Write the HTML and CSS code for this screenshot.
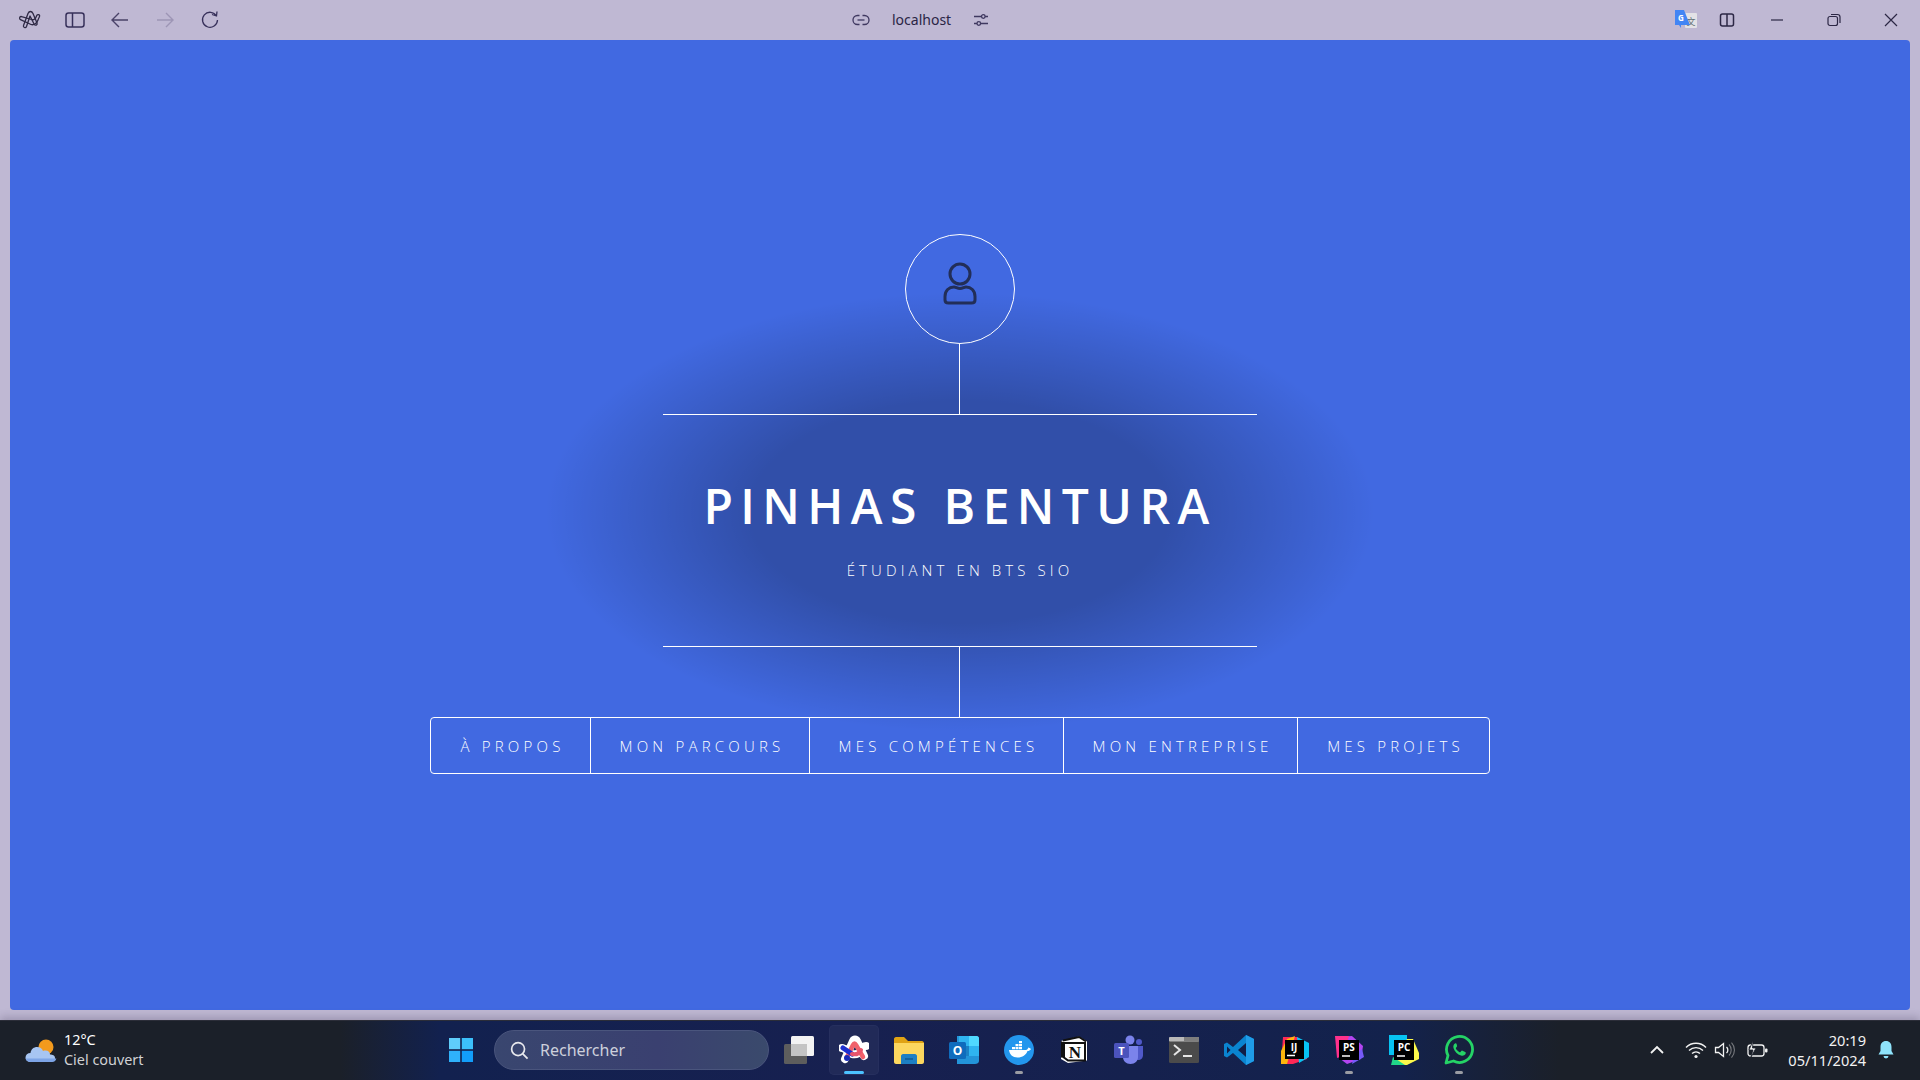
FILE: index.html
```html
<!DOCTYPE html>
<html lang="fr">
<head>
<meta charset="utf-8">
<title>Pinhas Bentura</title>
<link rel="stylesheet" href="styles.css">
</head>
<body>
<header class="topbar">
  <div class="tb-left">
    <svg class="tb-ico" viewBox="0 0 24 24"><g fill="none" stroke="#2f2a45" stroke-width="1.3" stroke-linejoin="round"><path d="M12.5 3.500c1.500 0 2 1 2.500 2l4 9.500c.8 2-1.800 3-2.800 1.200L12 8 8.500 18.500c-.8 2-3.600 1-3-1l4.500-12c.5-1.200 1.300-2 2.500-2z"/><path d="M3 8.500c-1.500 0-2 2.500-.5 3.200L13 16.500c3 1 6-1.500 7-4.500 .8-2.500 2-3.500 1.600-4.500-.6-1.500-2.600-1-3.100.5-.8 2.400-2.300 4.500-5 3.500L4.500 8.800C4 8.600 3.500 8.500 3 8.500z"/></g></svg>
    <svg class="tb-ico" viewBox="0 0 24 24"><g fill="none" stroke="#37305a" stroke-width="1.500"><rect x="3" y="5" width="18" height="14" rx="2.500"/><path d="M9.500 5v14"/></g></svg>
    <svg class="tb-ico" viewBox="0 0 24 24"><path d="M20 12H5M11 5l-7 7 7 7" fill="none" stroke="#4a4268" stroke-width="1.400"/></svg>
    <svg class="tb-ico" viewBox="0 0 24 24"><path d="M4 12h15M13 5l7 7-7 7" fill="none" stroke="#9d95b5" stroke-width="1.400"/></svg>
    <svg class="tb-ico" viewBox="0 0 24 24"><path d="M18.500 8A7.500 7.500 0 1 0 19.500 12M14 6.500l4.500 1.500.5-4.500" fill="none" stroke="#37305a" stroke-width="1.300"/></svg>
  </div>
  <div class="tb-center">
    <svg class="tb-small" viewBox="0 0 18 18"><g fill="none" stroke="#3f3860" stroke-width="1.300"><path d="M7.500 4.500H5.500a4.500 4.500 0 0 0 0 9h2M10.500 4.500h2a4.500 4.500 0 0 1 0 9h-2"/><path d="M5.500 9h7"/></g></svg>
    <span class="url">localhost</span>
    <svg class="tb-small" viewBox="0 0 18 18"><g fill="none" stroke="#3f3860" stroke-width="1.300"><path d="M2 5.500h7.500M13 5.500h3M2 12.500h3M8.500 12.500h7.500"/><circle cx="11.300" cy="5.500" r="1.800"/><circle cx="6.800" cy="12.500" r="1.800"/></g></svg>
  </div>
  <div class="tb-right">
    <svg class="tr-translate" viewBox="0 0 22 22"><rect x="10" y="4" width="12" height="15" rx="1" fill="#e3e2e6"/><text x="16" y="16" class="tr-x">文</text><path d="M0 1h9l6 15H6v3l-2-3H0z" fill="#4285f4"/><text x="6" y="11.500" class="tr-g">G</text></svg>
    <svg class="tr-ico tr-split" viewBox="0 0 18 18"><g fill="none" stroke="#2c2745" stroke-width="1.500"><rect x="2.500" y="3" width="13" height="12" rx="2"/><path d="M9 3v12"/></g></svg>
    <svg class="tr-ico" viewBox="0 0 18 18"><path d="M3 9h12" stroke="#2c2745" stroke-width="1.200" fill="none"/></svg>
    <svg class="tr-ico" viewBox="0 0 18 18"><g fill="none" stroke="#2c2745" stroke-width="1.200"><rect x="3" y="5.500" width="9.500" height="9" rx="2"/><path d="M6 3.500h6.500a2.500 2.500 0 0 1 2.500 2.500v6"/></g></svg>
    <svg class="tr-ico" viewBox="0 0 18 18"><path d="M3 3l12 12M15 3L3 15" stroke="#2c2745" stroke-width="1.200" fill="none"/></svg>
  </div>
</header>

<main class="window">
  <section class="hero">
    <div class="logo">
      <svg class="logo-ico" viewBox="0 0 40 44"><g fill="none" stroke="#222e58" stroke-width="3"><circle cx="20" cy="12" r="10"/><path d="M8.500 41h23c2.500 0 3.500-1 3.500-3v-3.500c0-6-4-9.500-9-9.500-2 0-3.200 1.500-6 1.500s-4-1.500-6-1.500c-5 0-9 3.500-9 9.500V38c0 2 1 3 3.500 3z"/></g></svg>
    </div>
    <div class="vline"></div>
    <div class="content">
      <h1>PINHAS BENTURA</h1>
      <p>ÉTUDIANT EN BTS SIO</p>
    </div>
    <div class="vline"></div>
    <nav class="menu">
      <a>À PROPOS</a>
      <a>MON PARCOURS</a>
      <a>MES COMPÉTENCES</a>
      <a>MON ENTREPRISE</a>
      <a>MES PROJETS</a>
    </nav>
  </section>
</main>

<footer class="taskbar">
  <div class="weather">
    <svg class="weather-ico" viewBox="0 0 32 28"><circle cx="21" cy="10" r="7.500" fill="#f39a1d"/><path d="M6 25c-3.500 0-5.500-2-5.500-4.500S2.500 16 5.500 16c.5-4 3.500-6 6.500-6 3 0 5 1.500 6 4 .8-.4 1.500-.5 2.500-.5 3 0 4.500 2 4.500 4 2.500 0 5 .8 5 3.500 0 3-2 4-4.500 4z" fill="#a7c5f2"/><path d="M6 25c-3 0-5-1.500-5.400-3.500h30.800c-.4 2.500-2.400 3.500-4.900 3.500z" fill="#7da4e6"/></svg>
    <div class="weather-text"><span class="temp">12°C</span><span class="cond">Ciel couvert</span></div>
  </div>
  <div class="tasks">
    <div class="task">
      <svg class="app" viewBox="0 0 30 30"><path d="M3 3h11.200v11.200H3z" fill="#5fcdfb"/><path d="M15.800 3H27v11.200H15.800z" fill="#3cc0fb"/><path d="M3 15.800h11.200V27H3z" fill="#2fb1fb"/><path d="M15.800 15.800H27V27H15.800z" fill="#129dfa"/></svg>
    </div>
    <div class="search">
      <svg class="search-ico" viewBox="0 0 20 20"><g fill="none" stroke="#e8e9ee" stroke-width="1.800"><circle cx="8.500" cy="8.500" r="6.800"/><path d="M13.500 13.500l5 5"/></g></svg>
      <span>Rechercher</span>
    </div>
    <div class="task">
      <svg class="app" viewBox="0 0 30 30"><rect x="0" y="9" width="23" height="20" rx="1.500" fill="#5d5d5d"/><rect x="7" y="1" width="23" height="20" rx="1.500" fill="#f3f3f3"/><rect x="7" y="9" width="16" height="12" fill="#c4c4c4"/></svg>
    </div>
    <div class="task active">
      <svg class="app" viewBox="0 0 30 30"><path d="M6 24L14 6c1-2 3-2 4 0l7 15M3 13c3 0 7 5 10 6 5 1 8-1 9-4 1-2 3-4 5-4" fill="none" stroke="#fff" stroke-width="8" stroke-linecap="round" stroke-linejoin="round"/><path d="M14 10c1-2 2-2 3 0l7 12M8 22l6-12" fill="none" stroke="#f0616b" stroke-width="4.500" stroke-linecap="round"/><path d="M4 13l9 6" fill="none" stroke="#1d2fd0" stroke-width="5" stroke-linecap="round"/><path d="M13 19c4 1 7 0 9-4" fill="none" stroke="#e8546b" stroke-width="4" stroke-linecap="round"/><circle cx="8" cy="23" r="3" fill="#1a2bb8"/></svg>
    </div>
    <div class="task">
      <svg class="app" viewBox="0 0 30 30"><path d="M0 4c0-1 .8-2 2-2h8l4 4h14c1 0 2 1 2 2v4H0z" fill="#e0a314"/><path d="M0 8h30v19c0 1-1 2-2 2H2c-1 0-2-1-2-2z" fill="#fcd75f"/><path d="M7 21c0-1 1-2 2-2h12c1 0 2 1 2 2v8H7z" fill="#1d7fc4"/><path d="M11 24h8" stroke="#0b4f86" stroke-width="1.200"/></svg>
    </div>
    <div class="task">
      <svg class="app" viewBox="0 0 30 30"><path d="M8 1h18c2 0 4 1 4 3v22c0 2-2 3-4 3H8z" fill="#2394d9"/><path d="M10 1h10v10H10z" fill="#2fb4f0"/><path d="M20 1h8c1 0 2 1 2 2v8H20z" fill="#50d9ff"/><path d="M10 11h10v10H10z" fill="#1b80c4"/><path d="M20 11h10v10H20z" fill="#2fb4f0"/><rect x="0" y="7" width="17" height="17" rx="1.500" fill="#0f6cbd"/><text x="8.500" y="20" class="ol-o">O</text></svg>
    </div>
    <div class="task dot">
      <svg class="app" viewBox="0 0 30 30"><circle cx="15" cy="15" r="15" fill="#2396ed"/><path d="M5 15h17c1 0 2-1 2.200-2.500 1 .2 2 .6 2.800 1.500-1 1.500-2 2-3.500 2-1.500 4-5 6.500-10 6.500-5 0-8-3-8.500-7.500z" fill="#fff"/><path d="M8 12h3v2.300H8zM11.500 12h3v2.300h-3zM15 12h3v2.300h-3zM11.500 9h3v2.300h-3zM15 9h3v2.300h-3zM15 6h3v2.300h-3z" fill="#fff"/></svg>
    </div>
    <div class="task">
      <svg class="app" viewBox="0 0 30 30"><path d="M2 6l18-4.500 8 5v19L9 28l-7-4z" fill="#fff"/><path d="M5 8h21v17.500H9l-4-3z" fill="#fff" stroke="#111" stroke-width="2"/><path d="M2 6l3.500 2v15L2 22.500z" fill="#111"/><path d="M4 5.500L20 2l7 4.500" fill="none" stroke="#111" stroke-width="1.800"/><text x="16" y="23" class="no-n">N</text></svg>
    </div>
    <div class="task">
      <svg class="app" viewBox="0 0 30 30"><circle cx="16" cy="5" r="4.500" fill="#7b83eb"/><circle cx="25" cy="7" r="3" fill="#5059c9"/><path d="M21 11h8v9c0 3-2 5-5 5s-3-1-3-3z" fill="#5059c9"/><path d="M9 11h15v11c0 4-3 7-7.500 7S9 26 9 22z" fill="#7b83eb"/><rect x="0" y="8" width="15" height="15" rx="1.500" fill="#4b53bc"/><text x="7.500" y="20" class="te-t">T</text></svg>
    </div>
    <div class="task">
      <svg class="app" viewBox="0 0 30 30"><rect x="0" y="2" width="30" height="26" rx="1.500" fill="#4b4b4b"/><rect x="0" y="2" width="30" height="4.500" rx="1" fill="#b9b9b9"/><rect x="15" y="2" width="15" height="4.500" fill="#7e7e7e"/><path d="M5 10l6 5-6 5" fill="none" stroke="#e6e6e6" stroke-width="2"/><path d="M14 21h9" stroke="#e6e6e6" stroke-width="2"/></svg>
    </div>
    <div class="task">
      <svg class="app" viewBox="0 0 30 30"><path d="M22 0l8 4v22l-8 4-13-12-6 4.500-3-1.500V9l3-1.500L9 12z" fill="#0a84d0"/><path d="M22 0l8 4v22l-8 4z" fill="#1f9ce8"/><path d="M22 8l-8 7 8 7z" fill="#111d45"/><path d="M3 11.500L6.500 15 3 18.500z" fill="#111d45"/></svg>
    </div>
    <div class="task">
      <svg class="app" viewBox="0 0 30 30"><path d="M4 2h14l12 8-2 14-14 5H2z" fill="#fe2857"/><path d="M18 2l12 6v14l-10 6z" fill="#07c3f2"/><path d="M2 16l6-12 8-3-8 28H2z" fill="#fdb60d"/><rect x="6" y="5" width="19" height="19" fill="#000"/><text x="15" y="15.500" class="jb-t">IJ</text><path d="M8 20.500h8" stroke="#fff" stroke-width="1.500"/></svg>
    </div>
    <div class="task dot">
      <svg class="app" viewBox="0 0 30 30"><path d="M2 2l16-1 11 10-2 13-14 5-8-6z" fill="#b345f1"/><path d="M1 1h14l-6 20-6 2z" fill="#ff318c"/><path d="M20 20l8-6 2 8-12 7z" fill="#765af8"/><rect x="5" y="5" width="20" height="20" fill="#000"/><text x="15" y="16" class="jb-t">PS</text><path d="M8 21h8" stroke="#fff" stroke-width="1.500"/></svg>
    </div>
    <div class="task">
      <svg class="app" viewBox="0 0 30 30"><path d="M0 0h18v10H6v8H0z" fill="#21d789"/><path d="M0 0h18v8H8v12H0z" fill="#07c3f2"/><path d="M18 4h6l6 14v6l-12 6-14 0 0-6z" fill="#fcf84a"/><path d="M4 22l12 8h-14z" fill="#21d789"/><rect x="5" y="5" width="20" height="20" fill="#000"/><text x="15" y="16" class="jb-t">PC</text><path d="M8 21h8" stroke="#fff" stroke-width="1.500"/></svg>
    </div>
    <div class="task dot">
      <svg class="app" viewBox="0 0 30 30"><path d="M2 28l2-7.500A13 13 0 1 1 9.500 26z" fill="none" stroke="#25d366" stroke-width="2.800" stroke-linejoin="round"/><path d="M11 8.500c-1.500 1-2 2.500-1.500 4.500 1 3.500 4 6.500 7.500 7.500 2 .5 3.500 0 4.500-1.500.5-1 .3-1.700-.3-2l-2.700-1.300c-.6-.3-1 0-1.300.4l-.7.8c-.4.4-.8.400-1.300.1-1.300-.7-2.500-1.900-3.200-3.200-.3-.5-.2-.9.200-1.300l.6-.7c.3-.4.400-.8.200-1.300L12.500 8.700c-.3-.6-.9-.7-1.500-.2z" fill="#25d366"/></svg>
    </div>
  </div>
  <div class="tray">
    <svg class="chev" viewBox="0 0 16 16"><path d="M2 11l6-6 6 6" fill="none" stroke="#f2f2f2" stroke-width="1.800"/></svg>
    <svg class="wifi" viewBox="0 0 22 18"><g fill="none" stroke="#f2f2f2" stroke-width="1.400"><path d="M1 6.500a14 14 0 0 1 20 0"/><path d="M4 9.500a10 10 0 0 1 14 0"/><path d="M7 12.500a6 6 0 0 1 8 0"/></g><circle cx="11" cy="15.500" r="1.600" fill="#f2f2f2"/></svg>
    <svg class="vol" viewBox="0 0 22 18"><path d="M1.500 6.500h3l5-4v13l-5-4h-3z" fill="none" stroke="#f2f2f2" stroke-width="1.300"/><path d="M12.500 6a4 4 0 0 1 0 6" fill="none" stroke="#f2f2f2" stroke-width="1.300"/><path d="M15 3.500a8 8 0 0 1 0 11M17.500 1.500a11 11 0 0 1 0 15" fill="none" stroke="#77797e" stroke-width="1.100"/></svg>
    <svg class="batt" viewBox="0 0 22 18"><rect x="1" y="4" width="16" height="11" rx="2.500" fill="none" stroke="#f2f2f2" stroke-width="1.300"/><rect x="18" y="7.500" width="2.500" height="4" rx="1" fill="#f2f2f2"/><path d="M6 0L2 9h4l-2 7 5-9H5.500z" fill="#f2f2f2" stroke="#1b2029" stroke-width=".8"/></svg>
    <div class="clock"><span>20:19</span><span>05/11/2024</span></div>
    <svg class="bell" viewBox="0 0 18 20"><path d="M9 1c-3.500 0-5.500 2.500-5.500 6v4L1.500 14.500h15L14.500 11V7C14.500 3.500 12.500 1 9 1z" fill="#8fe3fb"/><path d="M6.500 16a2.500 2.500 0 0 0 5 0z" fill="#8fe3fb"/></svg>
  </div>
</footer>
</body>
</html>
```
FILE: styles.css
```css
* { box-sizing: border-box; }
html, body { margin: 0; height: 100%; }
body {
  width: 1920px;
  height: 1080px;
  overflow: hidden;
  display: flex;
  flex-direction: column;
  background: #bfb8d3;
  font-family: "Open Sans", "Noto Sans", sans-serif;
}

/* browser chrome */
.topbar {
  height: 40px;
  flex: none;
  display: flex;
  align-items: center;
}
.tb-left {
  width: 852px;
  padding-left: 18px;
  display: flex;
  align-items: center;
  gap: 21px;
}
.tb-ico { width: 24px; height: 24px; display: block; flex: none; }
.tb-center {
  display: flex;
  align-items: center;
  color: #2a2545;
  font-size: 14px;
}
.tb-small { width: 18px; height: 18px; flex: none; }
.url { margin: 0 21px 2px 22px; font-family: "Noto Sans", sans-serif; }
.tb-right {
  margin-left: auto;
  display: flex;
  align-items: center;
  padding-right: 20px;
}
.tr-translate { width: 22px; height: 22px; flex: none; margin-right: 21px; }
.tr-x { font-size: 9px; fill: #5f6e72; text-anchor: middle; font-family: "Noto Sans CJK SC", sans-serif; }
.tr-g { font-size: 8px; font-weight: 700; fill: #fff; text-anchor: middle; font-family: "Open Sans", sans-serif; }
.tr-ico { width: 18px; height: 18px; flex: none; margin-right: 39px; }
.tr-split { margin-right: 32px; }
.tr-ico:last-child { margin-right: 0; }

/* page */
.window {
  flex: none;
  height: 970px;
  margin: 0 10px 10px;
  border-radius: 4px;
  background-color: #4169e1;
  background-image: radial-gradient(ellipse 415px 220px at 950px 472px, rgba(0,0,0,.25) 50%, rgba(0,0,0,0) 100%);
  padding-top: 194px;
  display: flex;
  justify-content: center;
}
.hero {
  display: flex;
  flex-direction: column;
  align-items: center;
}
.logo {
  width: 110px;
  height: 110px;
  border: 1px solid #fff;
  border-radius: 50%;
  display: flex;
  justify-content: center;
  padding-top: 27px;
}
.logo-ico { width: 40px; height: 44px; display: block; }
.vline { width: 1px; height: 70px; background: #fff; flex: none; margin-left: -1px; }
.content {
  width: 594px;
  height: 233px;
  border-top: 1px solid #fff;
  border-bottom: 1px solid #fff;
  color: #fff;
  text-align: center;
  padding-top: 63px;
}
.content h1 {
  margin: 0;
  font-size: 48px;
  line-height: 56px;
  font-weight: 600;
  letter-spacing: 7.4px;
}
.content p {
  margin: 25px 0 0;
  font-size: 15px;
  line-height: 22px;
  font-weight: 300;
  letter-spacing: 4.1px;
}
.menu {
  display: flex;
  height: 57px;
  border: 1px solid #fff;
  border-radius: 4px;
}
.menu a {
  display: flex;
  align-items: center;
  justify-content: center;
  padding-left: 4px;
  color: #fff;
  font-size: 15px;
  font-weight: 300;
  letter-spacing: 4.2px;
  border-left: 1px solid #fff;
}
.menu a:first-child { border-left: 0; width: 159px; }
.menu a:nth-child(2) { width: 219px; }
.menu a:nth-child(3) { width: 254px; }
.menu a:nth-child(4) { width: 234px; }
.menu a:nth-child(5) { width: 192px; }

/* taskbar */
.taskbar {
  height: 60px;
  flex: none;
  display: flex;
  align-items: center;
  border-top: 1px solid #2b2d38;
  box-shadow: 0 -3px 8px rgba(30,25,50,.22);
  background: linear-gradient(90deg, #1b2029 0, #1b2029 340px, #12214f 440px, #172050 860px, #13224c 1400px, #1b2029 1560px, #1b2029 100%);
}
.weather {
  width: 436px;
  padding-left: 25px;
  display: flex;
  align-items: center;
  gap: 7px;
  flex: none;
}
.weather-ico { width: 32px; height: 28px; flex: none; }
.weather-text { display: flex; flex-direction: column; font-size: 14.4px; line-height: 20px; margin-top: -2px; font-family: "Noto Sans", sans-serif; }
.temp { color: #fff; }
.cond { color: #d0d1d4; }
.tasks { display: flex; align-items: center; gap: 5px; margin-top: -1px; }
.task {
  width: 50px;
  height: 50px;
  display: flex;
  align-items: center;
  justify-content: center;
  border-radius: 5px;
  position: relative;
  flex: none;
}
.app { width: 30px; height: 30px; display: block; }
.task.active { background: #212a58; box-shadow: inset 0 0 0 1px #262f5e; }
.task.active::after {
  content: "";
  position: absolute;
  left: 15px;
  bottom: 1px;
  width: 20px;
  height: 3px;
  border-radius: 2px;
  background: #4cc2ff;
}
.task.dot::after {
  content: "";
  position: absolute;
  left: 21px;
  bottom: 1px;
  width: 8px;
  height: 3px;
  border-radius: 2px;
  background: #9a9ca3;
}
.search {
  width: 275px;
  height: 40px;
  margin-left: 3px;
  border-radius: 20px;
  background: linear-gradient(90deg, #39466f, #3a4070 60%, #3a4a6c);
  border: 1px solid #4a557d;
  display: flex;
  align-items: center;
  padding-left: 15px;
  gap: 11px;
  color: #cdd0dc;
  font-size: 16px;
  font-family: "Noto Sans", sans-serif;
}
.search-ico { width: 19px; height: 19px; flex: none; }
.tray {
  margin-left: auto;
  margin-top: -2px;
  display: flex;
  align-items: center;
  padding-right: 25px;
  color: #fff;
}
.chev { width: 16px; height: 16px; margin-right: 20px; }
.wifi { width: 22px; height: 18px; margin-right: 7px; }
.vol { width: 22px; height: 18px; margin-right: 11px; }
.batt { width: 22px; height: 18px; margin-right: 19px; }
.clock {
  display: flex;
  flex-direction: column;
  align-items: flex-end;
  font-size: 14.6px;
  line-height: 20px;
  color: #f2f2f2;
  font-family: "Noto Sans", sans-serif;
}
.bell { width: 18px; height: 20px; margin-left: 11px; }

/* lettering in svg icons */
.ol-o { font: 700 12px "Open Sans", sans-serif; fill: #fff; text-anchor: middle; }
.no-n { font: 700 17px "Liberation Serif", serif; fill: #111; text-anchor: middle; }
.te-t { font: 700 11px "Open Sans", sans-serif; fill: #fff; text-anchor: middle; }
.jb-t { font: 700 10px "Open Sans", sans-serif; fill: #fff; text-anchor: middle; }
```
